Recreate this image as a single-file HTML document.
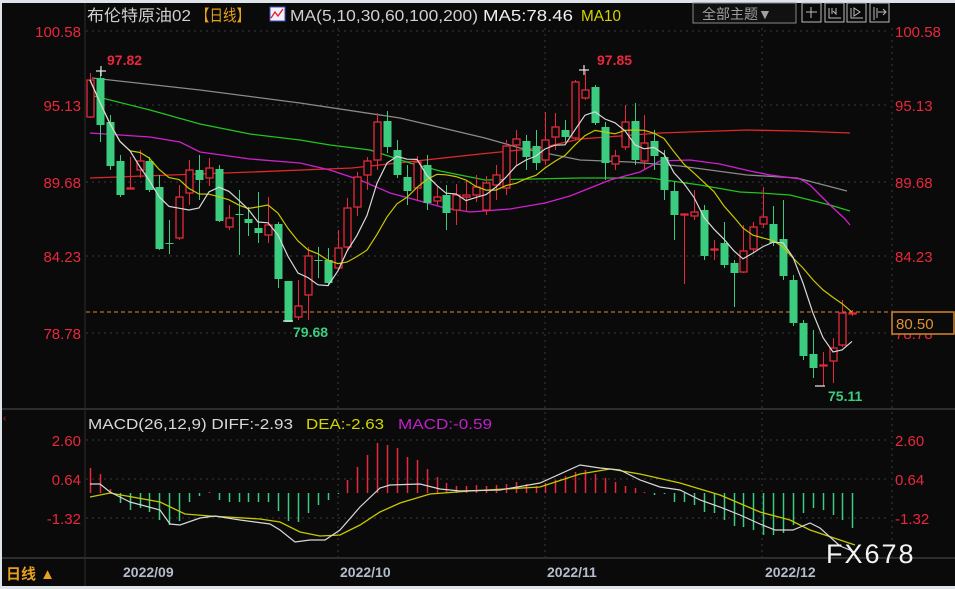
<!DOCTYPE html>
<html><head><meta charset="utf-8"><style>
html,body{margin:0;padding:0;background:#dfe3ea;}
#w{position:relative;width:955px;height:589px;overflow:hidden;background:#dfe3ea;font-family:"Liberation Sans","Noto Sans CJK SC",sans-serif;}
svg{position:absolute;left:0;top:0;}
</style></head><body><div id="w">
<svg id="s" width="955" height="589" xmlns="http://www.w3.org/2000/svg" font-family="Liberation Sans, Noto Sans CJK SC, sans-serif">
<rect x="2" y="3" width="953" height="583" fill="#0a0a0a"/>
<g stroke="#3a3a3a" stroke-dasharray="2,4" stroke-width="1">
<line x1="86" y1="31" x2="890" y2="31"/><line x1="86" y1="105" x2="890" y2="105"/><line x1="86" y1="182" x2="890" y2="182"/><line x1="86" y1="256" x2="890" y2="256"/><line x1="86" y1="333" x2="890" y2="333"/>
<line x1="86" y1="440" x2="890" y2="440"/><line x1="86" y1="479" x2="890" y2="479"/><line x1="86" y1="518" x2="890" y2="518"/>
<line x1="338" y1="28" x2="338" y2="558"/><line x1="545" y1="28" x2="545" y2="558"/><line x1="762" y1="28" x2="762" y2="558"/><line x1="892" y1="28" x2="892" y2="558"/>
</g>
<line x1="85" y1="3" x2="85" y2="586" stroke="#2e2e2e"/>
<line x1="2" y1="409" x2="955" y2="409" stroke="#2e2e2e" stroke-width="2"/>
<line x1="2" y1="558" x2="955" y2="558" stroke="#2e2e2e" stroke-width="2"/>
<line x1="86" y1="312" x2="890" y2="312" stroke="#e08a2a" stroke-dasharray="4,3"/>
<g id="mas" fill="none" stroke-width="1.3">
<polyline stroke="#8a8a8a" points="92,78 200,90 300,103 400,118 485,138 520,148 580,160 630,162 680,166 747,175 797,178 847,191"/>
<polyline stroke="#e02828" points="90,178 252,172 352,168 480,154 540,148 580,139 660,133 747,130 797,131 850,133"/>
<polyline stroke="#22c41e" points="90,95 150,110 200,124 250,134 300,140 330,145 370,150 410,163 440,171 485,180 580,178 650,178 700,185 740,192 760,193 790,195 830,205 850,211"/>
<polyline stroke="#d020d0" points="90,133 150,137 180,142 200,152 250,159 300,163 330,170 360,180 390,193 420,201 445,208 470,212 510,209 545,203 570,196 590,188 610,180 640,172 660,161 690,160 720,164 750,171 770,175 800,179 810,185 820,195 830,205 845,219 850,225"/>
</g>
<g id="cd"></g>
<g id="ma510" fill="none" stroke-width="1.2"></g>
<g id="hist" stroke-width="1.5"></g>
<polyline fill="none" stroke="#c8c800" stroke-width="1.3" points="90,497 110,493 160,502 185,514 210,516 260,519 280,522 300,532 320,536 340,535 360,525 380,512 400,503 430,494 470,491 540,487 580,474 610,469 640,474 680,483 720,495 760,512 790,520 810,530 840,540 855,545"/>
<polyline fill="none" stroke="#d8d8d8" stroke-width="1.2" points="90,484 100,484 110,492 130,502 160,510 170,524 180,525 200,518 215,516 240,520 270,524 280,530 295,542 310,540 325,540 340,530 360,507 380,488 390,485 420,484 440,489 460,491 500,490 540,483 580,465 600,468 620,470 640,480 660,487 680,490 700,500 720,507 740,515 760,524 775,530 793,530 810,523 820,528 840,546 855,552"/>
<g fill="#e8283c" font-size="15" text-anchor="end">
<text x="81" y="37">100.58</text><text x="81" y="111">95.13</text><text x="81" y="188">89.68</text><text x="81" y="262">84.23</text><text x="81" y="339">78.78</text>
<text x="81" y="446">2.60</text><text x="81" y="485">0.64</text><text x="81" y="524">-1.32</text>
</g>
<g fill="#e8283c" font-size="15">
<text x="895" y="37">100.58</text><text x="895" y="111">95.13</text><text x="895" y="188">89.68</text><text x="895" y="262">84.23</text><text x="895" y="339">78.78</text>
<text x="895" y="446">2.60</text><text x="895" y="485">0.64</text><text x="895" y="524">-1.32</text>
</g>
<rect x="892" y="312" width="62" height="22" fill="#0a0a0a" stroke="#d4862a" stroke-width="1.5"/>
<text x="896" y="329" fill="#e09030" font-size="15">80.50</text>
<g font-size="14" font-weight="bold">
<text x="107" y="65" fill="#e8283c">97.82</text><text x="597" y="65" fill="#e8283c">97.85</text>
<text x="293" y="337" fill="#3ccc80">79.68</text><text x="828" y="401" fill="#3ccc80">75.11</text>
</g>
<g stroke="#e8e8e8" stroke-width="1.2">
<line x1="96" y1="71" x2="106" y2="71"/><line x1="101" y1="66" x2="101" y2="76"/>
<line x1="579" y1="70" x2="589" y2="70"/><line x1="584" y1="65" x2="584" y2="75"/>
<line x1="283" y1="321" x2="293" y2="321"/><line x1="815" y1="386" x2="825" y2="386"/>
</g>
<g font-size="16">
<text x="87" y="21" fill="#d0d0d0" textLength="104" lengthAdjust="spacingAndGlyphs">布伦特原油02</text>
<text x="196" y="21" fill="#e8a020" textLength="54" lengthAdjust="spacingAndGlyphs">【日线】</text>
<rect x="270" y="7" width="15" height="14" fill="#f0f0ff" stroke="#4050c0"/>
<polyline points="271,18 275,12 278,16 283,9" fill="none" stroke="#e02020" stroke-width="1.3"/>
<text x="290" y="21" fill="#d0d0d0" textLength="188" lengthAdjust="spacingAndGlyphs">MA(5,10,30,60,100,200)</text>
<text x="483" y="21" fill="#f0f0f0" textLength="90" lengthAdjust="spacingAndGlyphs">MA5:78.46</text>
<text x="581" y="21" fill="#d4d400" textLength="40" lengthAdjust="spacingAndGlyphs">MA10</text>
</g>
<rect x="693" y="3" width="103" height="20" fill="#111" stroke="#888"/>
<text x="702" y="19" fill="#a0a0a0" font-size="14">全部主题▼</text>
<g fill="none" stroke="#bbb">
<rect x="802" y="3" width="19" height="19"/><rect x="825" y="3" width="19" height="19"/><rect x="847" y="3" width="19" height="19"/><rect x="870" y="3" width="19" height="19"/>
<path d="M811 7v11M806 12h11M829 8v10h12M832 8v6M836 8v6l-3-3M851 8v10h12M854 8l6 4-6 4zM874 7v13M877 8v10M878 12h8M883 9l3 3-3 3"/>
</g>
<g font-size="15">
<text x="88" y="429" fill="#d8d8d8" textLength="205" lengthAdjust="spacingAndGlyphs">MACD(26,12,9) DIFF:-2.93</text>
<text x="306" y="429" fill="#d4d400" textLength="78" lengthAdjust="spacingAndGlyphs">DEA:-2.63</text>
<text x="398" y="429" fill="#c020c8" textLength="94" lengthAdjust="spacingAndGlyphs">MACD:-0.59</text>
</g>
<text x="3" y="421" fill="#c02020" font-size="10">‹</text>
<g fill="#b4bccc" font-size="14" font-weight="bold">
<text x="123" y="577">2022/09</text><text x="340" y="577">2022/10</text><text x="547" y="577">2022/11</text><text x="765" y="577">2022/12</text>
</g>
<text x="6" y="579" fill="#e8a020" font-size="15" font-weight="bold">日线 ▲</text>
<text x="826" y="563" fill="#f4f4f4" font-size="27" letter-spacing="2">FX678</text>
</svg>
<script>
var C=[
['r',80,117,73,118],['g',78,125,70,142],['g',122,166,115,170],['g',161,195,155,197],['r',188,189,157,189],['r',161,170,150,178],['g',161,190,157,192],['g',187,249,175,250],['g',243,244,220,254],['r',197,238,185,240],
['r',170,193,160,205],['g',170,180,155,200],['r',168,178,158,186],['g',169,221,165,222],['r',218,227,205,230],['g',214,215,190,255],['g',219,223,207,236],['g',228,233,192,243],['r',225,235,197,243],['g',224,279,222,288],
['g',281,322,281,322],['r',306,317,280,320],['r',256,295,247,320],['g',260,261,247,278],['g',260,283,248,286],['r',248,268,230,270],['r',208,247,198,250],['r',177,207,172,216],['r',161,175,157,190],['r',122,160,113,170],
['g',121,147,111,153],['g',150,175,140,178],['g',177,191,165,205],['r',162,188,156,200],['g',165,203,155,210],['r',197,201,186,205],['g',195,213,185,230],['r',195,210,184,225],['r',195,197,180,212],['r',187,195,175,202],
['r',183,210,176,215],['r',175,185,165,200],['r',146,188,140,195],['r',139,145,130,165],['g',141,157,135,170],['g',146,163,130,170],['r',140,160,112,165],['r',127,137,113,150],['g',130,137,120,142],['r',82,138,80,140],
['r',90,98,70,100],['g',87,123,85,125],['g',127,163,122,180],['r',156,164,150,170],['r',122,147,105,150],['g',121,160,103,165],['r',143,161,115,170],['g',141,156,130,170],['g',157,190,150,200],['g',191,215,182,240],
['r',214,215,214,284],['r',212,216,190,220],['g',210,256,205,260],['r',249,250,240,260],['g',243,265,222,268],['g',263,273,260,307],['r',251,272,225,273],['r',227,249,222,253],['r',217,224,187,228],['g',224,243,206,246],
['g',239,276,200,280],['g',280,323,275,326],['g',323,356,320,360],['g',354,368,330,378],['r',365,366,352,386],['r',348,361,338,383],['r',313,345,300,347],['r',313,314,310,316]];
var g=document.getElementById('cd'),h='',cl=[];
C.forEach(function(c,i){var x=Math.round(90+i*9.9),col=c[0]=='r'?'#e8283c':'#3ccc80';
h+='<line x1="'+(x+.5)+'" y1="'+c[3]+'" x2="'+(x+.5)+'" y2="'+c[4]+'" stroke="'+col+'"/>';
var ht=Math.max(1,c[2]-c[1]);
if(c[0]=='r')h+='<rect x="'+(x-3)+'" y="'+c[1]+'" width="7" height="'+ht+'" fill="#0a0a0a" stroke="'+col+'" stroke-width="1.3"/>';
else h+='<rect x="'+(x-3.5)+'" y="'+c[1]+'" width="8" height="'+ht+'" fill="'+col+'"/>';
cl.push(c[0]=='r'?c[1]:c[2]);});
g.innerHTML=h;
function ma(n){var p=[];for(var i=0;i<cl.length;i++){var s=0,k=0;for(var j=Math.max(0,i-n+1);j<=i;j++){s+=cl[j];k++;}p.push(Math.round(90+i*9.9)+','+(s/k).toFixed(1));}return p.join(' ');}
document.getElementById('ma510').innerHTML='<polyline stroke="#c8c800" points="'+ma(10)+'"/><polyline stroke="#d8d8d8" points="'+ma(5)+'"/>';
var H=[468,474,489,503,510,508,512,520,525,521,502,496,492,500,502,502,502,502,502,511,521,522,513,505,500,494,480,467,455,443,445,448,457,460,469,477,483,486,486,485,486,485,484,482,484,486,483,480,476,472,470,474,478,482,486,488,492,495,494,502,502,505,512,513,520,526,527,530,535,535,533,525,513,508,510,515,520,528];
var hh='',Z=493;H.forEach(function(v,i){var x=Math.round(90+i*9.9)+.5;var col=v<Z?'#e8283c':'#3ccc80';hh+='<line x1="'+x+'" y1="'+Z+'" x2="'+x+'" y2="'+v+'" stroke="'+col+'"/>';});
document.getElementById('hist').innerHTML=hh;
</script>
</div></body></html>
